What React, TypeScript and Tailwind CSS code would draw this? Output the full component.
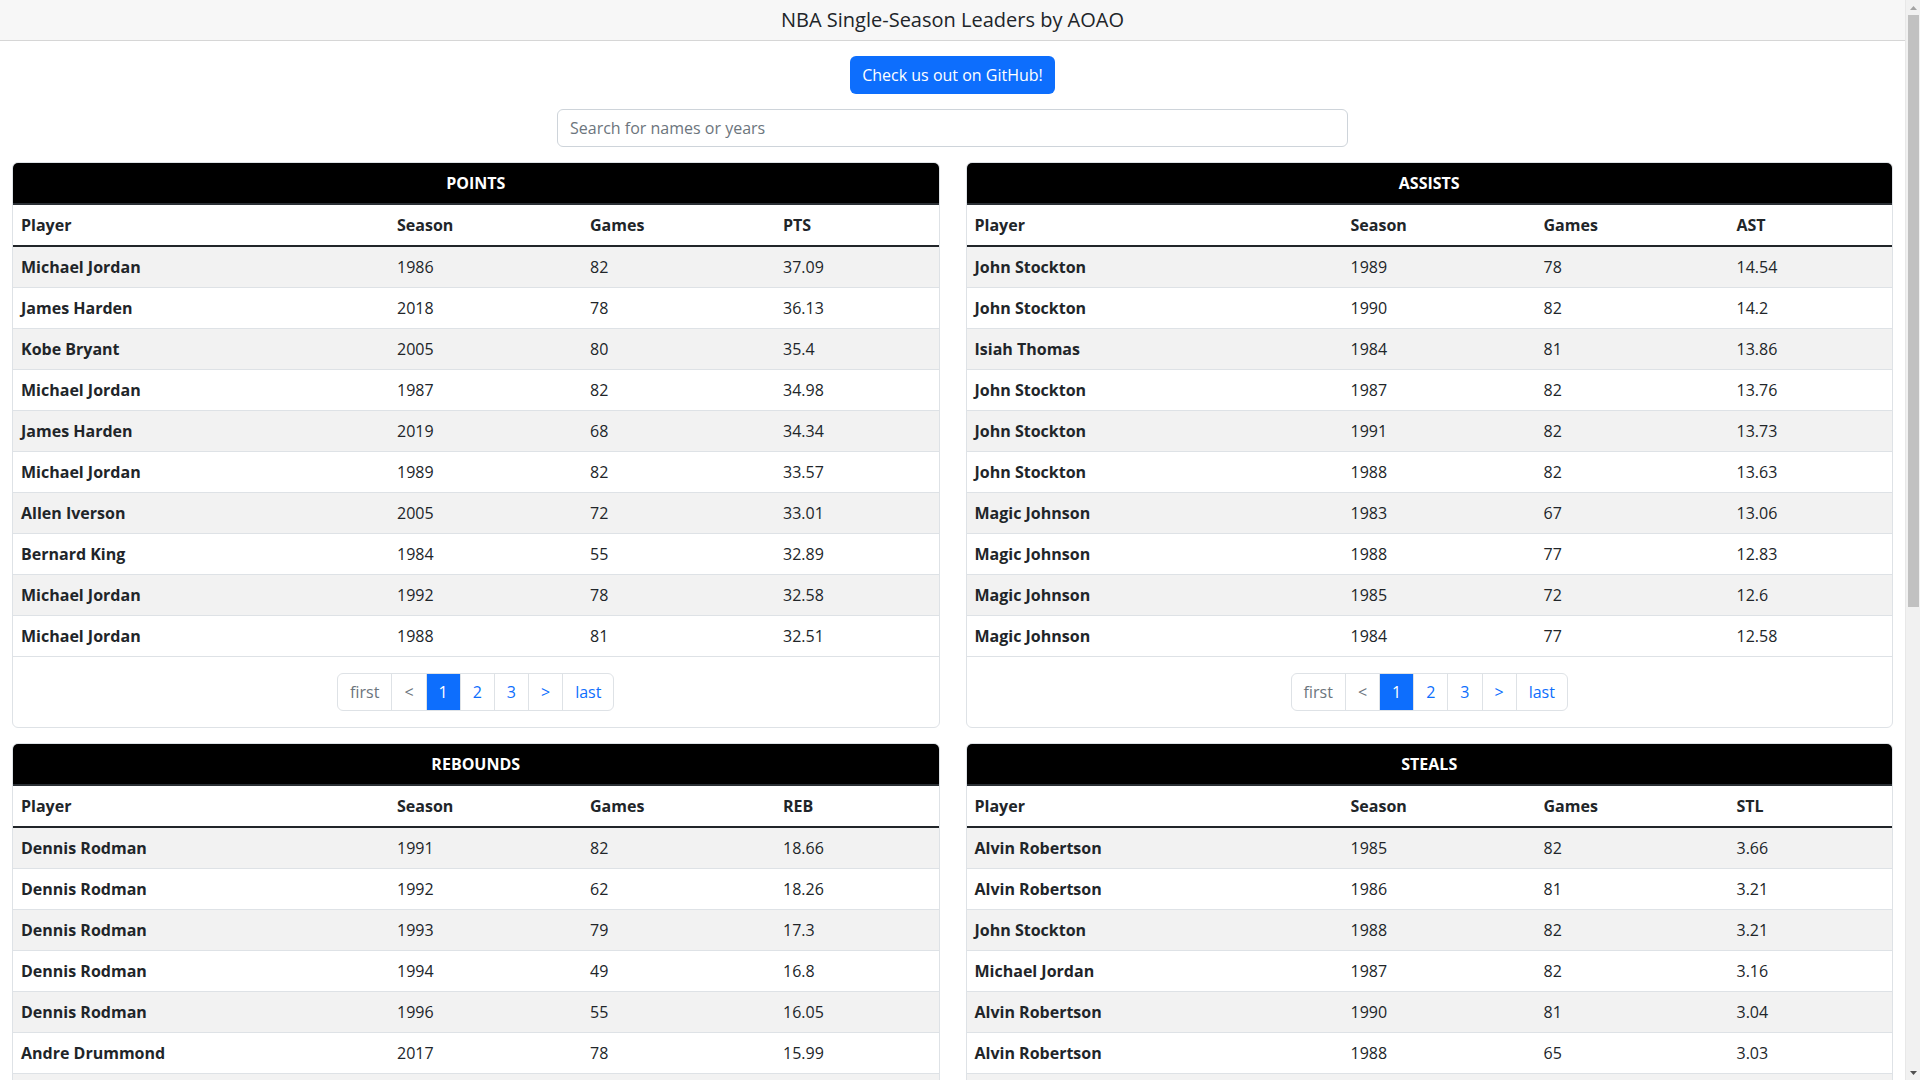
import React from "react";

type Row = [string, number, number, number];

interface Board {
	title: string;
	stat: string;
	rows: Row[];
}

// leaders per category, first page only
const boards: Board[] = [
	{
		title: "POINTS",
		stat: "PTS",
		rows: [
			["Michael Jordan", 1986, 82, 37.09],
			["James Harden", 2018, 78, 36.13],
			["Kobe Bryant", 2005, 80, 35.4],
			["Michael Jordan", 1987, 82, 34.98],
			["James Harden", 2019, 68, 34.34],
			["Michael Jordan", 1989, 82, 33.57],
			["Allen Iverson", 2005, 72, 33.01],
			["Bernard King", 1984, 55, 32.89],
			["Michael Jordan", 1992, 78, 32.58],
			["Michael Jordan", 1988, 81, 32.51],
		],
	},
	{
		title: "ASSISTS",
		stat: "AST",
		rows: [
			["John Stockton", 1989, 78, 14.54],
			["John Stockton", 1990, 82, 14.2],
			["Isiah Thomas", 1984, 81, 13.86],
			["John Stockton", 1987, 82, 13.76],
			["John Stockton", 1991, 82, 13.73],
			["John Stockton", 1988, 82, 13.63],
			["Magic Johnson", 1983, 67, 13.06],
			["Magic Johnson", 1988, 77, 12.83],
			["Magic Johnson", 1985, 72, 12.6],
			["Magic Johnson", 1984, 77, 12.58],
		],
	},
	{
		title: "REBOUNDS",
		stat: "REB",
		rows: [
			["Dennis Rodman", 1991, 82, 18.66],
			["Dennis Rodman", 1992, 62, 18.26],
			["Dennis Rodman", 1993, 79, 17.3],
			["Dennis Rodman", 1994, 49, 16.8],
			["Dennis Rodman", 1996, 55, 16.05],
			["Andre Drummond", 2017, 78, 15.99],
			["Dennis Rodman", 1997, 80, 15.5],
			["Kevin Willis", 1991, 82, 15.48],
			["Dennis Rodman", 1990, 82, 15.03],
			["Dwight Howard", 2011, 78, 14.71],
		],
	},
	{
		title: "STEALS",
		stat: "STL",
		rows: [
			["Alvin Robertson", 1985, 82, 3.66],
			["Alvin Robertson", 1986, 81, 3.21],
			["John Stockton", 1988, 82, 3.21],
			["Michael Jordan", 1987, 82, 3.16],
			["Alvin Robertson", 1990, 81, 3.04],
			["Alvin Robertson", 1988, 65, 3.03],
			["Michael Ray Richardson", 1984, 82, 2.96],
			["John Stockton", 1991, 82, 2.98],
			["Fat Lever", 1987, 82, 2.92],
			["Michael Jordan", 1988, 82, 2.89],
		],
	},
	{
		title: "BLOCKS",
		stat: "BLK",
		rows: [
			["Mark Eaton", 1984, 82, 5.56],
			["Manute Bol", 1985, 80, 4.96],
			["Mark Eaton", 1985, 80, 4.61],
			["Hakeem Olajuwon", 1989, 82, 4.59],
			["Dikembe Mutombo", 1995, 82, 4.49],
			["David Robinson", 1991, 68, 4.49],
			["Mark Eaton", 1983, 82, 4.28],
			["Hakeem Olajuwon", 1992, 82, 4.17],
			["Alonzo Mourning", 1998, 69, 3.91],
			["Shaquille O'Neal", 1992, 81, 3.53],
		],
	},
	{
		title: "TURNOVERS",
		stat: "TOV",
		rows: [
			["James Harden", 2016, 81, 5.72],
			["Russell Westbrook", 2016, 81, 5.42],
			["Allen Iverson", 2005, 75, 4.61],
			["John Wall", 2016, 78, 4.12],
			["Isiah Thomas", 1986, 81, 4.01],
			["Micheal Ray Richardson", 1984, 82, 3.8],
			["Kevin Porter", 1985, 80, 3.77],
			["Magic Johnson", 1988, 79, 3.65],
			["Michael Jordan", 1986, 82, 3.5],
			["Artis Gilmore", 1984, 82, 3.13],
		],
	},
];

const font = { fontFamily: "'Open Sans', 'Noto Sans', sans-serif" };

const Pagination = () => {
	const cell = "flex h-[38px] items-center border border-[#dee2e6] px-3 text-base -ml-px";
	return (
		<ul className="flex">
			<li className={`${cell} ml-0 rounded-l-[6px] text-[#6c757d]`}>first</li>
			<li className={`${cell} text-[#6c757d]`}>&lt;</li>
			<li className={`${cell} z-10 border-[#0d6efd] bg-[#0d6efd] text-white`}>1</li>
			<li className={`${cell} text-[#0d6efd]`}>2</li>
			<li className={`${cell} text-[#0d6efd]`}>3</li>
			<li className={`${cell} text-[#0d6efd]`}>&gt;</li>
			<li className={`${cell} rounded-r-[6px] text-[#0d6efd]`}>last</li>
		</ul>
	);
};

const LeaderCard = ({ board }: { board: Board }) => (
	<div className="overflow-hidden rounded-[6px] border border-[#dee2e6] bg-white">
		<table className="w-full table-fixed border-collapse text-base leading-6 text-[#212529]">
			<colgroup>
				<col className="w-[376px]" />
				<col className="w-[193px]" />
				<col className="w-[193px]" />
				<col />
			</colgroup>
			<thead>
				<tr>
					<th colSpan={4} className="border-b-2 border-[#2b3035] bg-black p-2 text-center font-bold text-white">
						{board.title}
					</th>
				</tr>
				<tr className="border-b-2 border-[#212529]">
					<th className="p-2 text-left font-bold">Player</th>
					<th className="p-2 text-left font-bold">Season</th>
					<th className="p-2 text-left font-bold">Games</th>
					<th className="p-2 text-left font-bold">{board.stat}</th>
				</tr>
			</thead>
			<tbody>
				{board.rows.map((r, i) => (
					<tr key={i} className={`border-b border-[#dee2e6] ${i % 2 === 0 ? "bg-[#f2f2f2]" : "bg-white"}`}>
						<td className="p-2 font-bold">{r[0]}</td>
						<td className="p-2">{r[1]}</td>
						<td className="p-2">{r[2]}</td>
						<td className="p-2">{r[3]}</td>
					</tr>
				))}
			</tbody>
		</table>
		<div className="flex justify-center py-4">
			<Pagination />
		</div>
	</div>
);

// classic browser scrollbar, drawn over the right edge of the window
const Scrollbar = () => (
	<div className="fixed right-0 top-0 flex h-screen w-[15px] flex-col items-center border-l border-[#e8e8e8] bg-[#f1f1f1]">
		<div className="flex h-[15px] w-full items-center justify-center">
			<svg width="7" height="4" viewBox="0 0 7 4">
				<path d="M0 4 L3.5 0 L7 4 Z" fill="#a3a3a3" />
			</svg>
		</div>
		<div className="w-[11px] flex-none">
			<div className="h-[592px] w-full bg-[#c1c1c1]" />
		</div>
		<div className="flex-1" />
		<div className="flex h-[15px] w-full items-center justify-center">
			<svg width="7" height="4" viewBox="0 0 7 4">
				<path d="M0 0 L7 0 L3.5 4 Z" fill="#505050" />
			</svg>
		</div>
	</div>
);

export default function App() {
	return (
		<div className="min-h-screen bg-white text-[#212529]" style={font}>
			<main className="w-[1905px]">
				<header className="flex h-[41px] items-center justify-center border-b border-[#d6d6d6] bg-[#f7f7f7]">
					<h1 className="text-xl">NBA Single-Season Leaders by AOAO</h1>
				</header>

				<div className="mt-[15px] flex justify-center">
					<button
						type="button"
						className="h-[38px] rounded-[6px] bg-[#0d6efd] px-3 text-base text-white"
					>
						Check us out on GitHub!
					</button>
				</div>

				<div className="mt-[15px] flex justify-center">
					<input
						type="text"
						placeholder="Search for names or years"
						className="h-[38px] w-[791px] rounded-[6px] border border-[#ced4da] px-3 text-base placeholder:text-[#6c757d]"
					/>
				</div>

				<div className="mt-[15px] grid grid-cols-2 gap-x-[26px] gap-y-[15px] px-3 pb-[22px]">
					{boards.map((b) => (
						<LeaderCard key={b.title} board={b} />
					))}
				</div>
			</main>
			<Scrollbar />
		</div>
	);
}
